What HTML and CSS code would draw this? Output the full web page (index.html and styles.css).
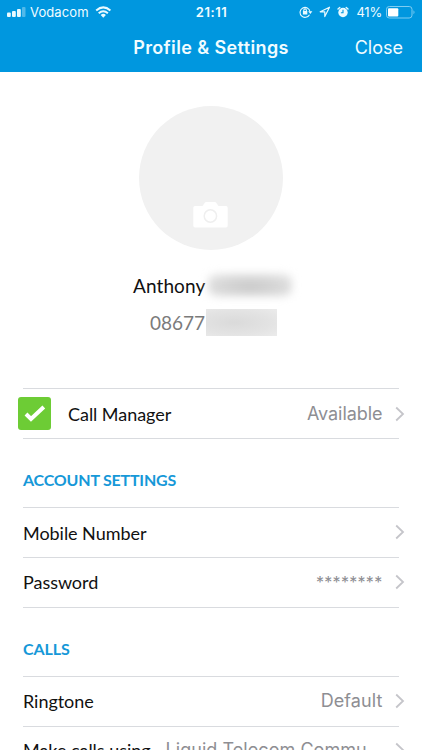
FILE: index.html
```html
<!DOCTYPE html>
<html lang="en">
<head>
<meta charset="utf-8">
<title>Profile &amp; Settings</title>
<link rel="stylesheet" href="styles.css">
</head>
<body>
<header class="header">
  <div class="status">
    <div class="status-left">
      <svg class="signal" width="19" height="10" viewBox="0 0 19 10" fill="#e9faff"><rect x="0" y="5.500" width="3.800" height="4.500" rx="1"/><rect x="5" y="4" width="3.800" height="6" rx="1"/><rect x="10" y="2" width="3.800" height="8" rx="1"/><rect x="15" y="0" width="3.500" height="10" rx="1" opacity=".35"/></svg>
      <span class="carrier">Vodacom</span>
      <svg class="wifi" width="17" height="12" viewBox="0 0 17 12" fill="none" stroke="#e9faff" stroke-width="2"><path d="M1.200 4.400Q8.300-1.700 15.400 4.400M3.700 7.200Q8.300 3.200 12.900 7.200"/><path d="M5.700 9Q8.300 6.700 10.900 9L8.300 11.700Z" fill="#e9faff" stroke="none"/></svg>
    </div>
    <span class="time">21:11</span>
    <div class="status-right">
      <svg class="lock" width="14" height="12" viewBox="0 0 14 12" fill="none" stroke="#e9faff" stroke-width="1.100"><path d="M10.500 8.700A5 5 0 1 1 11 5.500"/><path d="M9.200 5.200h4.200L11.300 8Z" fill="#e9faff" stroke="none"/><rect x="3.900" y="5" width="4.400" height="3.500" fill="#e9faff" stroke="none"/><path d="M4.800 5.300V4.200a1.300 1.300 0 0 1 2.600 0v1.100"/></svg>
      <svg class="location" width="12" height="12" viewBox="0 0 12 12" fill="none" stroke="#e9faff" stroke-width="1.200" stroke-linejoin="round"><path d="M10.500 1.200 1.200 5.800h4.600v4.800Z"/></svg>
      <svg class="alarm" width="12" height="12" viewBox="0 0 12 12"><circle cx="6" cy="6.500" r="4.700" fill="#e9faff"/><path d="M1 3 2.800 1.400M11 3 9.200 1.400" stroke="#e9faff" stroke-width="1.400" stroke-linecap="round"/><path d="M6 3.700v3H3.900" fill="none" stroke="#0097df" stroke-width="1.100"/></svg>
      <span class="percent">41%</span>
      <svg class="battery" width="30" height="13" viewBox="0 0 30 13"><rect x=".5" y=".5" width="25.500" height="11.500" rx="2.800" fill="none" stroke="#7fcdf2"/><rect x="2" y="2.200" width="10.300" height="8.200" rx="1" fill="#fff"/><path d="M27.500 4.200q2 2 0 4Z" fill="#7fcdf2"/></svg>
    </div>
  </div>
  <div class="nav">
    <h1 class="title">Profile &amp; Settings</h1>
    <span class="close">Close</span>
  </div>
</header>
<main class="content">
  <section class="profile">
    <div class="avatar">
      <svg class="camera" width="35" height="26" viewBox="0 0 35 26"><path d="M2 4h7.500l2.300-3.300Q12.300 0 13.200 0h8.600q.9 0 1.400.7L25.500 4H33q1.700 0 1.700 1.700v17.800q0 1.900-1.700 1.900H2Q.3 25.400.3 23.500V5.700Q.3 4 2 4Z" fill="#fff"/><circle cx="17.400" cy="14" r="6.200" fill="#fff" stroke="#efefef" stroke-width="1.500"/></svg>
    </div>
    <div class="name"><span>Anthony</span><i class="redacted-name"></i></div>
    <div class="phone"><span>08677</span><i class="redacted-phone"></i></div>
  </section>
  <div class="group">
    <div class="row manager"><span class="check"><svg width="22" height="18" viewBox="0 0 22 18"><path d="m2 9 5 5L19.800 2" fill="none" stroke="#fff" stroke-width="4"/></svg></span><span class="label">Call Manager</span><span class="value available">Available</span><svg class="chevron" width="10" height="16" viewBox="0 0 10 16"><path d="m1.200 1.500 6.800 6.500-6.800 6.500"/></svg></div>
  </div>
  <h2 class="heading">ACCOUNT SETTINGS</h2>
  <div class="group">
    <div class="row mobile"><span class="label">Mobile Number</span><span class="value"></span><svg class="chevron" width="10" height="16" viewBox="0 0 10 16"><path d="m1.200 1.500 6.800 6.500-6.800 6.500"/></svg></div>
    <div class="row password"><span class="label">Password</span><span class="value stars">********</span><svg class="chevron" width="10" height="16" viewBox="0 0 10 16"><path d="m1.200 1.500 6.800 6.500-6.800 6.500"/></svg></div>
  </div>
  <h2 class="heading calls">CALLS</h2>
  <div class="group">
    <div class="row ringtone"><span class="label">Ringtone</span><span class="value default">Default</span><svg class="chevron" width="10" height="16" viewBox="0 0 10 16"><path d="m1.200 1.500 6.800 6.500-6.800 6.500"/></svg></div>
    <div class="row last"><span class="label">Make calls using</span><span class="value liquid">Liquid Telecom Commu...</span><svg class="chevron" width="10" height="16" viewBox="0 0 10 16"><path d="m1.200 1.500 6.800 6.500-6.800 6.500"/></svg></div>
  </div>
</main>
</body>
</html>
```
FILE: styles.css
```css
* { box-sizing: border-box; }
html, body { margin: 0; height: 750px; overflow: hidden; }
body { background: #fff; font-family: Lato, sans-serif; color: #111; }
svg { display: block; flex: none; }

.header { height: 72px; background: #0097df; color: #f0fcff; font-family: Inter, sans-serif; }
.status { height: 24px; display: grid; grid-template-columns: 1fr auto 1fr; align-items: center; padding: 0 6px 0 7px; font-size: 13px; line-height: 24px; }
.status-left, .status-right { display: flex; align-items: center; }
.status-right { justify-content: flex-end; }
.carrier { margin-left: 4px; letter-spacing: .1px; }
.wifi { margin-left: 6px; }
.time { font-weight: 600; letter-spacing: .55px; }
.location { margin-left: 6px; }
.alarm { margin-left: 6px; }
.percent { margin-left: 7px; letter-spacing: -.2px; }
.battery { margin-left: 4px; }
.nav { height: 48px; display: grid; grid-template-columns: 1fr auto 1fr; align-items: center; padding: 0 19px; }
.title { grid-column: 2; margin: 0; font-size: 18px; font-weight: 600; line-height: 48px; letter-spacing: .38px; }
.close { justify-self: end; font-size: 18px; line-height: 48px; height: 48px; }

.profile { height: 316px; padding-top: 34px; }
.avatar { width: 144px; height: 144px; margin: 0 auto; border-radius: 50%; background: #f1f1f1; display: flex; justify-content: center; align-items: flex-end; padding-bottom: 22px; }
.camera { margin-right: 1px; }
.name, .phone { display: flex; align-items: center; }
.name { height: 36px; margin-top: 17px; padding-left: 133px; font-size: 19px; letter-spacing: .1px; }
.phone { height: 36px; margin-top: 1px; padding-left: 150px; font-size: 19px; color: #7b7b7b; }
.redacted-name { width: 84px; height: 22px; margin-left: 3px; border-radius: 8px; background: radial-gradient(ellipse at 50% 60%, #c9c9c9, #dadada 60%, #ebebeb); filter: blur(4px); }
.redacted-phone { width: 71px; height: 27px; margin-left: 1px; background: radial-gradient(ellipse at 40% 50%, #dadada, #e3e3e3 60%, #ebebeb); }

.group { margin: 0 23px; border-top: 1px solid #d9dbdf; }
.row { height: 50px; margin-right: -6px; display: flex; align-items: center; position: relative; font-size: 18px; line-height: 24px; }
.row::after { content: ""; position: absolute; left: 0; right: 6px; bottom: 0; height: 1px; background: #d9dbdf; }
.label { white-space: nowrap; letter-spacing: -.04px; }
.value { margin-left: auto; color: #8e8e93; font-family: Inter, sans-serif; white-space: nowrap; }
.stars { font-size: 16px; letter-spacing: .3px; }
.available { letter-spacing: -.05px; }
.default { letter-spacing: .1px; }
.liquid { letter-spacing: .05px; }
.chevron { margin-left: 12px; margin-right: .5px; fill: none; stroke: #c5c5ca; stroke-width: 1.800; }
.check { width: 33px; height: 33px; margin: 0 17px 0 -5px; border-radius: 3px; background: #6dcc35; display: flex; align-items: center; justify-content: center; }
.manager { padding-bottom: 1px; }
.mobile .chevron { margin-bottom: 2px; }
.password { padding-bottom: 2px; }
.ringtone { padding-bottom: 2px; }
.last { padding-bottom: 4px; }
.heading { height: 68px; margin: 0 23px; padding-top: 7px; line-height: 67px; font-size: 16px; font-weight: 700; letter-spacing: -.2px; color: #1698d8; }
.calls { letter-spacing: -.1px; }
```
